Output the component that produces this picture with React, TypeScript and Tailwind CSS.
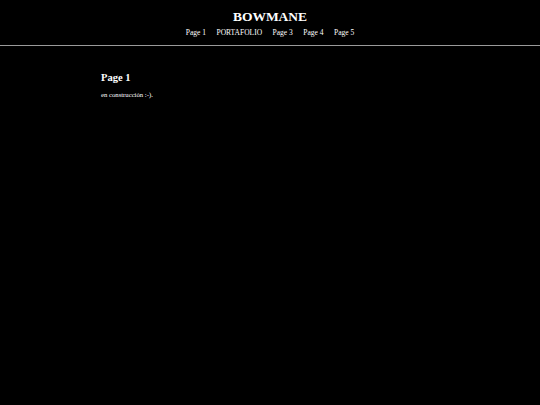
export default function App() {
  const links = ['Page 1', 'PORTAFOLIO', 'Page 3', 'Page 4', 'Page 5']
  return (
    <div className="min-h-[405px] w-[540px] bg-black text-white" style={{ fontFamily: '"Liberation Serif", serif' }}>
      <header className="flex flex-col items-center pt-[9px] border-b border-[#9a9a9a] h-[46px]">
        <h1 className="text-[13.5px] font-bold leading-[15px]">BOWMANE</h1>
        <nav className="flex gap-[10.5px] text-[7.5px] leading-[9px] mt-[4px] text-white">
          {links.map((l) => (
            <span key={l}>{l}</span>
          ))}
        </nav>
      </header>
      <main className="pl-[101px] pt-[26px]">
        <h2 className="text-[10.5px] font-bold leading-[12px]">Page 1</h2>
        <p className="text-[6.7px] leading-[8px] mt-[7px]">en construcción :-).</p>
      </main>
    </div>
  )
}
